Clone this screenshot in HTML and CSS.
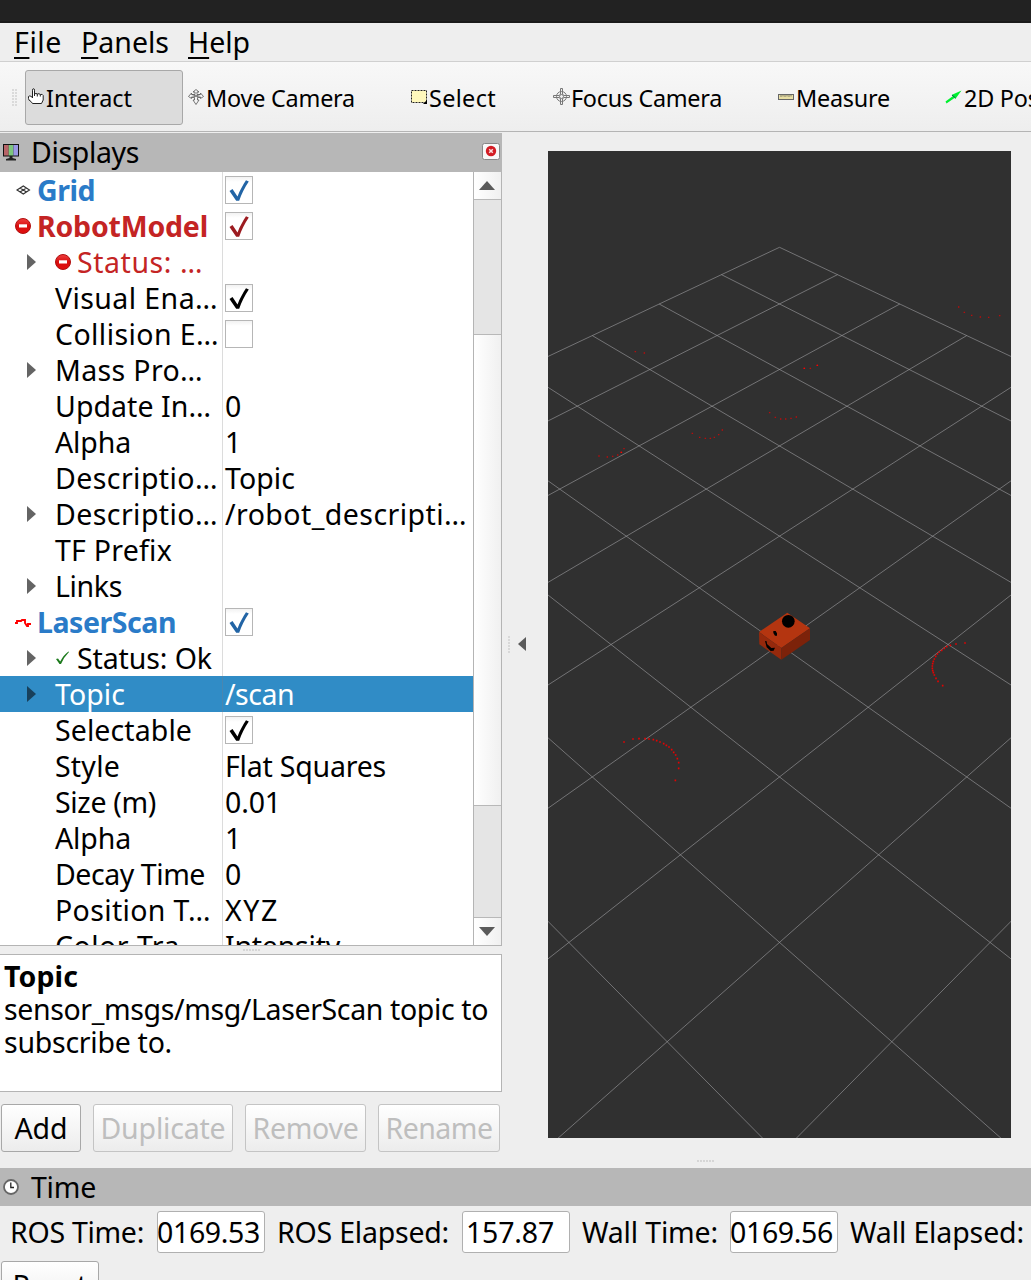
FILE: index.html
```html
<!DOCTYPE html>
<html lang="en">
<head>
<meta charset="utf-8">
<title>RViz</title>
<link rel="stylesheet" href="styles.css">
</head>
<body>
<svg class="defs" width="0" height="0">
  <defs>
    <linearGradient id="redball" x1="0" y1="0" x2="0" y2="1"><stop offset="0" stop-color="#f04040"/><stop offset=".5" stop-color="#d80e0e"/><stop offset="1" stop-color="#e01010"/></linearGradient>
    <symbol id="i-error" viewBox="0 0 16 16"><circle cx="8" cy="8" r="7.5" fill="url(#redball)" stroke="#b01010"/><rect x="4" y="6.300" width="8" height="3.200" fill="#fff"/></symbol>
    <symbol id="i-arrow" viewBox="0 0 9 16"><path d="M0 0L9 8L0 16Z" fill="currentColor"/></symbol>
    <symbol id="i-check" viewBox="0 0 20 22"><path d="M.5 11L3.500 9L8.500 16.500C11 10 14 5 17 .3L19.800 1.500C15.500 8 12.500 14 10.200 20.800H7.200Z" fill="currentColor"/></symbol>
  </defs>
</svg>
<div class="window">
  <div class="titlebar"></div>
  <nav class="menubar">
    <span data-w="48"><u>F</u>ile</span><span data-w="88"><u>P</u>anels</span><span data-w="62"><u>H</u>elp</span>
  </nav>
  <div class="toolbar">
    <i class="grip"></i>
    <div class="tool active">
      <svg width="16" height="17" viewBox="0 0 16 17"><path d="M4.500 10V2.200Q4.500.700 5.500.700T6.500 2.200V6L15.200 7V12L13.500 15.500H4.500L3 13.500Q.5 12.500.5 10.500V8.500Q1.500 7.300 3.500 8.500Z" fill="#fff"/><path d="M4.500 10V2.200Q4.500.700 5.500.700T6.500 2.200V8M6.500 6Q8 4.800 9.300 6V8.500M9.300 6Q11 5 12.300 6.500V8.500M12.300 6.500Q14.500 5.800 15.200 7.500V12L13.500 15.500H4.500L3 13.500Q.5 12.500.5 10.500V8.500Q1.500 7.300 3.500 8.500L4.500 10" fill="none" stroke="#222"/></svg>
      <span data-w="86">Interact</span>
    </div>
    <div class="tool move">
      <svg width="16" height="16" viewBox="0 0 16 16"><path d="M8 .5L5 3H7V5.500H3.500V4L.5 7.500L3.500 9.500V8L6.500 8.500V11H5L8 15.500L11 11H9.500V8.500L12.500 8V9.500L15.500 7.500L12.500 4V5.500H9V3H11ZM4 5.500L12 8.500M12 5.500L4 8.500" fill="#f4f4f4" stroke="#555" stroke-width=".8"/></svg>
      <span data-w="149">Move Camera</span>
    </div>
    <div class="tool select">
      <svg width="16" height="14" viewBox="0 0 16 14"><rect x=".5" y=".5" width="15" height="12" fill="#fff8bc" stroke="#222" stroke-dasharray="2 1"/><path d="M16 10V14H12Z"/></svg>
      <span data-w="67">Select</span>
    </div>
    <div class="tool focus">
      <svg width="17" height="17" viewBox="0 0 17 17" fill="none" stroke="#777"><path d="M7.500.5H9.500V6L11 7.500H16.500V9.500H11L9.500 11V16.500H7.500V11L6 9.500H.5V7.500H6L7.500 6Z" fill="#eee"/><circle cx="8.500" cy="8.500" r="5"/><circle cx="8.500" cy="8.500" r="2"/></svg>
      <span data-w="151">Focus Camera</span>
    </div>
    <div class="tool measure">
      <svg width="16" height="6" viewBox="0 0 16 6"><rect x=".5" y=".5" width="15" height="5" fill="#e8dfa4" stroke="#666"/><path d="M3 1V3M5 1V2.500M7 1V3M9 1V2.500M11 1V3M13 1V2.500" stroke="#555" stroke-width=".7"/></svg>
      <span data-w="94">Measure</span>
    </div>
    <div class="tool pose">
      <svg width="17" height="14" viewBox="0 0 17 14"><path d="M16.500.5L6.500 5L8 6L.5 11.500L1.500 13.500L9.500 8L10.500 8.800Z" fill="#00f030"/><path d="M7 5L10.500 8" stroke="#065" stroke-width="1"/></svg>
      <span data-w="187">2D Pose Estimate</span>
    </div>
  </div>

  <main class="workspace">
    <section class="displays">
      <header class="dock-title">
        <svg class="dock-icon" width="16" height="17" viewBox="0 0 16 17"><rect width="16" height="12.500" fill="#111"/><rect x="1" y="1" width="4.700" height="10.500" fill="#b76468"/><rect x="5.700" y="1" width="4.700" height="10.500" fill="#7dc67e"/><rect x="10.400" y="1" width="4.600" height="10.500" fill="#9a98e4"/><path d="M6.500 12H9.500V14L13 15V16.500H3V15L6.500 14Z" fill="#222"/></svg>
        <span data-w="108">Displays</span>
        <svg class="close" width="18" height="17" viewBox="0 0 18 17"><rect x=".5" y=".5" width="17" height="16" rx="2" fill="#f8f8f8" stroke="#888"/><circle cx="9" cy="8" r="5.200" fill="#d31c24"/><path d="M7.200 6.200L10.800 9.800M10.800 6.200L7.200 9.800" stroke="#fbe0e0" stroke-width="1.500"/></svg>
      </header>
      <div class="tree">
        <div class="rows">
          <div class="row top blue"><div class="name"><svg class="icon" width="16" height="16" viewBox="0 0 16 16"><path d="M2 8L8.300 4L14.500 8L8.300 12ZM5 6L11.500 10M5 10L11.500 6" fill="none" stroke="#333" stroke-width="1.100"/></svg><b data-w="58">Grid</b></div><div class="value"><i class="box"><svg width="20" height="22"><use href="#i-check"/></svg></i></div></div>
          <div class="row top red"><div class="name"><svg class="icon" width="16" height="16"><use href="#i-error"/></svg><b data-w="171">RobotModel</b></div><div class="value"><i class="box"><svg width="20" height="22"><use href="#i-check"/></svg></i></div></div>
          <div class="row status red"><div class="name"><svg class="arrow" width="9" height="16"><use href="#i-arrow"/></svg><svg class="icon" width="16" height="16"><use href="#i-error"/></svg><span data-w="126">Status: …</span></div><div class="value"></div></div>
          <div class="row"><div class="name"><span data-w="163">Visual Ena…</span></div><div class="value"><i class="box"><svg width="20" height="22"><use href="#i-check"/></svg></i></div></div>
          <div class="row"><div class="name"><span data-w="164">Collision E…</span></div><div class="value"><i class="box"></i></div></div>
          <div class="row"><div class="name"><svg class="arrow" width="9" height="16"><use href="#i-arrow"/></svg><span data-w="148">Mass Pro…</span></div><div class="value"></div></div>
          <div class="row"><div class="name"><span data-w="156">Update In…</span></div><div class="value"><span data-w="17">0</span></div></div>
          <div class="row"><div class="name"><span data-w="76">Alpha</span></div><div class="value"><span data-w="17">1</span></div></div>
          <div class="row"><div class="name"><span data-w="163">Descriptio…</span></div><div class="value"><span data-w="70">Topic</span></div></div>
          <div class="row"><div class="name"><svg class="arrow" width="9" height="16"><use href="#i-arrow"/></svg><span data-w="163">Descriptio…</span></div><div class="value"><span data-w="242">/robot_descripti…</span></div></div>
          <div class="row"><div class="name"><span data-w="117">TF Prefix</span></div><div class="value"></div></div>
          <div class="row"><div class="name"><svg class="arrow" width="9" height="16"><use href="#i-arrow"/></svg><span data-w="67">Links</span></div><div class="value"></div></div>
          <div class="row top blue"><div class="name"><svg class="icon" width="16" height="16" viewBox="0 0 16 16"><path d="M0 9H2V7H6L7 6H10V9L12 12H13V10H16" fill="none" stroke="#f00" stroke-width="1.900"/></svg><b data-w="139">LaserScan</b></div><div class="value"><i class="box"><svg width="20" height="22"><use href="#i-check"/></svg></i></div></div>
          <div class="row status"><div class="name"><svg class="arrow" width="9" height="16"><use href="#i-arrow"/></svg><svg class="icon" width="16" height="16" viewBox="0 0 16 16"><path d="M1 9L3 8.500L5.200 11.500Q8.500 5 13.500 1.500L14 2Q9 7 6 14H4.500Z" fill="#1c7a1c"/></svg><span data-w="135">Status: Ok</span></div><div class="value"></div></div>
          <div class="row selected"><div class="name"><svg class="arrow" width="9" height="16"><use href="#i-arrow"/></svg><span data-w="70">Topic</span></div><div class="value"><span data-w="69">/scan</span></div></div>
          <div class="row"><div class="name"><span data-w="137">Selectable</span></div><div class="value"><i class="box"><svg width="20" height="22"><use href="#i-check"/></svg></i></div></div>
          <div class="row"><div class="name"><span data-w="65">Style</span></div><div class="value"><span data-w="161">Flat Squares</span></div></div>
          <div class="row"><div class="name"><span data-w="101">Size (m)</span></div><div class="value"><span data-w="56">0.01</span></div></div>
          <div class="row"><div class="name"><span data-w="76">Alpha</span></div><div class="value"><span data-w="17">1</span></div></div>
          <div class="row"><div class="name"><span data-w="150">Decay Time</span></div><div class="value"><span data-w="17">0</span></div></div>
          <div class="row"><div class="name"><span data-w="156">Position T…</span></div><div class="value"><span data-w="54">XYZ</span></div></div>
          <div class="row"><div class="name"><span data-w="148">Color Tra…</span></div><div class="value"><span data-w="115">Intensity</span></div></div>
        </div>
        <div class="scrollbar">
          <div class="sb-button"><svg width="16" height="9"><path d="M0 9L8 0L16 9Z" fill="#5a5a5a"/></svg></div>
          <div class="sb-track"><div class="sb-thumb"></div></div>
          <div class="sb-button"><svg width="16" height="9"><path d="M0 0L8 9L16 0Z" fill="#5a5a5a"/></svg></div>
        </div>
      </div>
      <div class="splitter"><i class="dots"></i></div>
      <div class="help">
        <div><b data-w="74">Topic</b></div>
        <div><span data-w="484">sensor_msgs/msg/LaserScan topic to</span></div>
        <div><span data-w="168">subscribe to.</span></div>
      </div>
      <div class="buttons">
        <button class="add"><span data-w="53">Add</span></button>
        <button class="duplicate" disabled><span data-w="125">Duplicate</span></button>
        <button class="remove" disabled><span data-w="106">Remove</span></button>
        <button class="rename" disabled><span data-w="107">Rename</span></button>
      </div>
    </section>
    <div class="collapse"><i class="grip"></i><svg width="8" height="14"><path d="M8 0V14L0 7Z" fill="#5a5a5a"/></svg></div>
    <section class="view">
      <svg width="463" height="987" viewBox="548 151 463 987">
        <g class="grid">
          <path id="family" d="M779.500 247.300L1621.900 644.500M721.400 274.600L1577.600 707.300M659.200 304L1528.300 777M592.300 335.600L1473.200 854.800M520.300 369.500L1411.300 942.400M442.500 406.200L1341.100 1041.700M358.300 445.900L1260.800 1155.200M266.700 489.100L1168.300 1286.100M166.800 536.200L1060.300 1438.900M57.400 587.800L932.600 1619.400M-62.900 644.500L779.500 1835.900"/>
          <use href="#family" transform="translate(1559 0) scale(-1 1)"/>
        </g>
        <g class="scan far" transform="translate(548 150) scale(.33333)">
          <path d="M1232 471h.1M1249 487h.1M1271 496h.1M1297 501h.1M1322 502h.1M1355 497h.1M262 605h.1M289 609h.1M769 655h.1M787 655h.1M808 646h.1M665 788h.1M682 802h.1M698 807h.1M713 807h.1M729 805h.1M745 801h.1M433 850h.1M455 862h.1M472 865h.1M487 865h.1M499 862h.1M512 854h.1M523 840h.1M153 918h.1M178 921h.1M194 919h.1M209 915h.1M220 907h.1M228 896h.1"/>
          <path class="hot" d="M769 655h.1M808 646h.1M220 907h.1"/>
        </g>
        <g class="scan" transform="translate(548 700) scale(.33333)">
          <path d="M228 126h.1M255 117h.1M273 116h.1M291 116h.1M303 117h.1M316 119h.1M326 122h.1M336 126h.1M347 131h.1M355 136h.1M363 141h.1M371 149h.1M377 157h.1M383 165h.1M388 176h.1M392 188h.1M392 205h.1M382 241h.1"/>
        </g>
        <g class="scan" transform="translate(730 590) scale(.33333)">
          <path d="M705 159h.1M678 162h.1M661 166h.1M650 170h.1M643 175h.1M635 181h.1M628 186h.1M622 192h.1M617 199h.1M613 207h.1M610 214h.1M608 221h.1M607 228h.1M607 235h.1M608 242h.1M610 248h.1M613 255h.1M618 265h.1M624 274h.1M638 287h.1"/>
        </g>
        <g transform="translate(730 590) scale(.33333)">
          <path d="M87 126L172 68L240 115L154 174Z" fill="#b43510"/>
          <path d="M87 126L154 174V209L88 163Z" fill="#96290c"/>
          <path d="M154 174L240 115V150L154 209Z" fill="#7c220a"/>
          <circle cx="175" cy="94" r="19"/>
          <path d="M130 123H137L141 130V137H135L130 129ZM105 153L110 154L111 162L124 174L135 173L131 182L122 183L110 172Z"/>
        </g>
      </svg>
      <i class="dots"></i>
    </section>
  </main>

  <section class="time">
    <header class="dock-title">
      <svg class="dock-icon" width="16" height="16" viewBox="0 0 16 16"><circle cx="8" cy="8" r="7" fill="#fff" stroke="#666" stroke-width="1.800"/><path d="M7.800 3.500V8.500H11" fill="none" stroke="#222" stroke-width="1.300"/></svg>
      <span data-w="65">Time</span>
    </header>
    <div class="fields">
      <span class="l1"><span data-w="134">ROS Time:</span></span><div class="field clipped"><span data-w="103">0169.53</span></div>
      <span class="l2"><span data-w="172">ROS Elapsed:</span></span><div class="field inset"><span data-w="88">157.87</span></div>
      <span class="l3"><span data-w="136">Wall Time:</span></span><div class="field clipped"><span data-w="103">0169.56</span></div>
      <span class="l4"><span data-w="174">Wall Elapsed:</span></span>
    </div>
    <button class="reset"><span data-w="75">Reset</span></button>
  </section>
</div>
<script src="labels.js"></script>
</body>
</html>
```
FILE: styles.css
```css
* { box-sizing: border-box; }

body {
  margin: 0;
  background: #eeeeee;
  color: #000;
  font-family: "Noto Sans", "Open Sans", sans-serif;
  font-size: 28.5px;
  overflow: hidden;
}

svg { display: block; flex: none; }
.defs { position: absolute; }
[data-w] { display: inline-block; white-space: pre; }

.window {
  width: 1031px;
  height: 1280px;
  display: flex;
  flex-direction: column;
  overflow: hidden;
}

.titlebar { flex: none; height: 23px; background: #222; border-bottom: 2px solid #1a1a1a; }

.menubar {
  flex: none;
  display: flex;
  gap: 19px;
  height: 39px;
  padding-left: 14px;
  line-height: 38px;
  border-bottom: 1px solid #d0d0d0;
}
.menubar u {
  text-decoration-thickness: 2px;
  text-underline-offset: 4px;
  text-decoration-skip-ink: none;
}

.toolbar {
  flex: none;
  display: flex;
  align-items: center;
  height: 70px;
  padding-top: 1px;
  border-bottom: 1px solid #b4b4b4;
  background: linear-gradient(#f8f8f8, #eeeeee);
  font-size: 23.4px;
}
.grip {
  flex: none;
  width: 5px;
  height: 17px;
  background: radial-gradient(circle at 1px 1px, #c8c8c8 .5px, transparent 1px) 0 0 / 3px 3px;
}
.toolbar .grip { margin: 0 8px 0 12px; }
.tool { display: flex; align-items: center; flex: none; height: 55px; gap: 2px; }
.tool.active {
  width: 158px;
  padding-left: 2px;
  margin-right: 5px;
  gap: 2px;
  background: #dcdcdc;
  border: 1px solid #a8a8a8;
  border-radius: 3px;
}
.tool svg { margin-bottom: 1px; }
.tool span { padding-top: 2px; }
.move { width: 223px; }
.select { width: 142px; }
.focus { width: 225px; gap: 1px; }
.measure { width: 167px; }

.workspace { flex: none; display: flex; height: 1036px; }
.displays { width: 502px; padding-top: 1px; display: flex; flex-direction: column; }

.dock-title {
  flex: none;
  display: flex;
  align-items: center;
  height: 39px;
  padding: 0 2px 1px 3px;
  gap: 12px;
  background: #b7b7b7;
}
.close { margin: 0 0 2px auto; }

.tree {
  display: flex;
  flex: none;
  height: 774px;
  background: #fff;
  border: solid #b4b4b4;
  border-width: 0 1px 1px 0;
  overflow: hidden;
}
.rows { width: 473px; flex: none; }
.row { display: flex; height: 36px; line-height: 36px; }
.name {
  display: flex;
  align-items: center;
  width: 223px;
  padding-left: 55px;
  border-right: 1px solid #dcdcdc;
}
.name .arrow { color: #646464; margin: 0 19px 0 -28px; }
.top .name { padding-left: 15px; }
.top .icon { margin-right: 6px; }
.status .icon { margin-right: 6px; }
.value { display: flex; align-items: center; padding-left: 2px; }
.blue { color: #2a7bc8; }
.red { color: #c42424; }
.blue .box { color: #2264a5; }
.red .box { color: #9c1b20; }
.selected { background: #308cc6; color: #fff; }
.selected .name { border-color: #4a86b0; }
.selected .arrow { color: #18405b; }
.box {
  display: block;
  width: 28px;
  height: 28px;
  padding: 3px 0 0 3px;
  border: 1px solid #b6b6b6;
  background: linear-gradient(#f2f2f2, #fff 5px);
}

.scrollbar {
  display: flex;
  flex-direction: column;
  width: 28px;
  border-left: 1px solid #b4b4b4;
}
.sb-button {
  flex: none;
  display: flex;
  align-items: center;
  justify-content: center;
  height: 27px;
  padding: 0 2px 1px 0;
  background: linear-gradient(90deg, #fff, #f0f0f0);
}
.sb-track {
  flex: 1;
  padding-top: 134px;
  background: #e5e5e5;
  border: solid #b8b8b8;
  border-width: 1px 0;
}
.sb-thumb {
  height: 472px;
  border: solid #b8b8b8;
  border-width: 1px 0;
  background: linear-gradient(90deg, #fff, #f0f0f0);
}

.splitter { flex: none; height: 8px; display: flex; align-items: center; justify-content: center; }
.dots {
  display: block;
  width: 17px;
  height: 2px;
  background: radial-gradient(circle at 1px 1px, #c4c4c4 .5px, transparent 1px) 0 0 / 3px 3px;
}

.help {
  flex: none;
  height: 138px;
  padding: 5px 0 0 4px;
  line-height: 33px;
  background: #fff;
  border: 1px solid #b4b4b4;
  border-left: 0;
}
.help > div { height: 33px; }

.buttons { display: flex; gap: 12px; padding: 12px 0 0 1px; }
button {
  display: flex;
  align-items: center;
  justify-content: center;
  flex: none;
  height: 48px;
  padding: 0 0 1px;
  font: inherit;
  color: #000;
  border: 1px solid #a8a8a8;
  border-radius: 3px;
  background: linear-gradient(#fff, #ececec);
}
button:disabled { color: #bebebe; border-color: #c4c4c4; }
.add { width: 80px; }
.duplicate { width: 140px; }
.remove { width: 121px; }
.rename { width: 122px; }

.collapse {
  display: flex;
  align-items: center;
  gap: 8px;
  width: 46px;
  padding: 0 0 12px 6px;
}
.collapse .grip { width: 2px; }

.view { width: 463px; padding-top: 19px; }
.view > svg { background: #303030; }
.view .dots { margin: 22px 0 0 149px; }
.grid { fill: none; stroke: #a0a0a4; stroke-opacity: .6; stroke-width: 1; }
.scan { fill: none; stroke: #e60000; stroke-width: 4.8; stroke-linecap: square; }
.scan.far { stroke: #b80c0c; stroke-width: 4.2; }
.scan .hot { stroke: #f00; }

.time .dock-title { height: 38px; padding-bottom: 0; }
.fields { display: flex; align-items: center; height: 53px; padding: 0 0 1px 10px; white-space: nowrap; }
.fields > span { margin-top: -1px; }
.field {
  flex: none;
  width: 108px;
  height: 42px;
  line-height: 40px;
  background: #fff;
  border: 1px solid #b0b0b0;
  border-radius: 3px;
  overflow: hidden;
}
.field.clipped span { margin-left: -1px; }
.field.inset { padding-left: 3px; }
.l1 { width: 147px; }
.l2 { width: 197px; padding-left: 12px; }
.l3 { width: 160px; padding-left: 12px; }
.l4 { padding-left: 12px; }
.l1, .l2, .l3, .l4 { flex: none; }
.reset { width: 98px; margin: 2px 0 0 1px; }
```
FILE: labels.js
```js
// Tracks each label so that its text fills the width given in data-w.
document.querySelectorAll("[data-w]").forEach(function (label) {
  var natural = label.getBoundingClientRect().width;
  var count = Array.from(label.textContent).length;
  label.style.letterSpacing = (Number(label.dataset.w) - natural) / count + "px";
});
```
